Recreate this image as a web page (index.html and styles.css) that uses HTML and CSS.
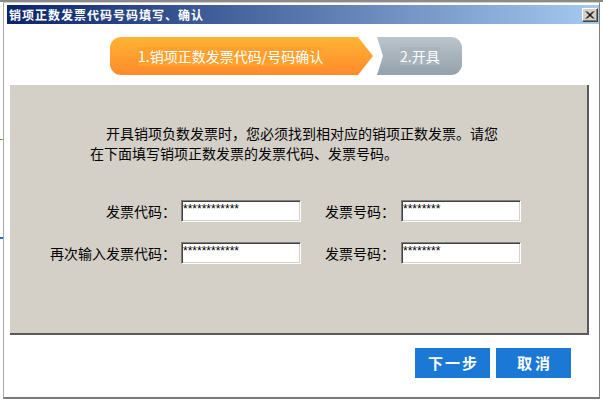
FILE: index.html
```html
<!DOCTYPE html>
<html lang="zh-CN">
<head>
<meta charset="utf-8">
<title>销项正数发票代码号码填写、确认</title>
<link rel="stylesheet" href="styles.css">
</head>
<body>
<div class="backdrop">
  <span class="bd-orange"></span>
  <span class="bd-blue"></span>
</div>
<div class="window">
  <div class="titlebar">
    <span class="title">销项正数发票代码号码填写、确认</span>
    <span class="close">
      <svg width="10" height="8" viewBox="0 0 10 8"><path d="M1 0.5 L8 7.5 M2 0.5 L9 7.5 M8 0.5 L1 7.5 M9 0.5 L2 7.5" stroke="#000" stroke-width="1" fill="none"/></svg>
    </span>
  </div>
  <div class="content">
    <div class="steps">
      <div class="step step-active"><span class="step-label">1.销项正数发票代码/号码确认</span></div>
      <div class="step step-next"><span class="step-label">2.开具</span></div>
    </div>
    <div class="panel">
      <p class="intro">开具销项负数发票时，您必须找到相对应的销项正数发票。请您<br>在下面填写销项正数发票的发票代码、发票号码。</p>
      <div class="form">
        <label class="lbl">发票代码：</label>
        <input class="field" type="text" value="************">
        <label class="lbl">发票号码：</label>
        <input class="field" type="text" value="********">
        <label class="lbl">再次输入发票代码：</label>
        <input class="field" type="text" value="************">
        <label class="lbl">发票号码：</label>
        <input class="field" type="text" value="********">
      </div>
    </div>
    <div class="actions">
      <button class="btn btn-next">下一步</button>
      <button class="btn btn-cancel">取消</button>
    </div>
  </div>
</div>
</body>
</html>
```
FILE: styles.css
```css
html, body {
  margin: 0;
  padding: 0;
}
body {
  width: 603px;
  height: 405px;
  background: #ffffff;
  border-top: 2px solid #8a8a8a;
  box-sizing: border-box;
  position: relative;
  overflow: hidden;
  font-family: "Noto Sans CJK SC", "Liberation Sans", sans-serif;
}
.backdrop {
  position: absolute;
  left: 0;
  top: 0;
  width: 3px;
  height: 405px;
}
.bd-orange {
  position: absolute;
  left: 0;
  top: 137px;
  width: 3px;
  height: 1px;
  background: #c87832;
}
.bd-blue {
  position: absolute;
  left: 0;
  top: 235px;
  width: 3px;
  height: 2px;
  background: #2a6ad0;
}
.window {
  margin-left: 3px;
  width: 597px;
  height: 397px;
  box-sizing: border-box;
  border-top: 1px solid #d4d0c8;
  border-left: 1px solid #a8a8a8;
  border-right: 1px solid #808080;
  border-bottom: 2px solid #7a7a7a;
  padding: 2px 0 0 3px;
  background: #ffffff;
  display: flex;
  flex-direction: column;
  position: relative;
}
.titlebar {
  height: 19px;
  flex: none;
  background: linear-gradient(to right, #0a246a, #a6caf0);
  display: flex;
  align-items: center;
  justify-content: space-between;
  padding: 0 1px 0 2px;
}
.title {
  color: #ffffff;
  font-size: 12px;
  font-weight: bold;
  letter-spacing: 1px;
  line-height: 19px;
}
.close {
  width: 16px;
  height: 14px;
  box-sizing: border-box;
  background: #d4d0c8;
  border-top: 1px solid #ffffff;
  border-left: 1px solid #ffffff;
  border-right: 1px solid #404040;
  border-bottom: 1px solid #404040;
  box-shadow: inset -1px -1px 0 #808080;
  display: flex;
  align-items: center;
  justify-content: center;
}
.close svg {
  display: block;
}
.content {
  flex: 1;
  display: flex;
  flex-direction: column;
}
.steps {
  height: 61px;
  box-sizing: border-box;
  padding: 13px 0 0 103px;
  display: flex;
  align-items: flex-start;
}
.step {
  height: 38px;
  display: flex;
  align-items: center;
  box-sizing: border-box;
  color: #ffffff;
  font-size: 14px;
}
.step-active {
  width: 263px;
  padding-left: 28px;
  background: linear-gradient(to bottom, #ffb434, #ff8a2a);
  border-radius: 11px 0 0 11px;
  clip-path: polygon(0 0, calc(100% - 15px) 0, 100% 50%, calc(100% - 15px) 100%, 0 100%);
}
.step-active .step-label {
  background: #ffa02f;
  line-height: 19px;
}
.step-next {
  width: 85px;
  margin-left: 4px;
  padding-left: 23px;
  background: linear-gradient(to bottom, #b9c4cc, #96a2ab);
  border-radius: 0 11px 11px 0;
  clip-path: polygon(0 0, 100% 0, 100% 100%, 0 100%, 6px 50%);
}
.step-next .step-label {
  background: #a8b3bb;
  line-height: 18px;
}
.panel {
  margin-left: 3px;
  width: 579px;
  height: 250px;
  box-sizing: border-box;
  background: #d4d0c8;
  border-right: 2px solid #5a5a5a;
  border-bottom: 2px solid #5a5a5a;
  padding: 38px 0 0 80px;
  flex: none;
}
.intro {
  margin: 0;
  font-size: 14px;
  line-height: 20px;
  color: #000000;
  text-indent: 16px;
}
.form {
  margin: 37px 0 0 -50px;
  display: grid;
  grid-template-columns: 141px 120px 100px 120px;
  grid-auto-rows: 22px;
  row-gap: 20px;
  align-items: center;
}
.lbl {
  text-align: right;
  font-size: 14px;
  color: #000000;
  padding-right: 5px;
  white-space: nowrap;
  line-height: 22px;
}
.form .lbl:nth-child(3),
.form .lbl:nth-child(7) {
  padding-right: 6px;
}
.field {
  width: 120px;
  height: 22px;
  box-sizing: border-box;
  margin: 0;
  padding: 0 1px 5px 1px;
  border: 1px solid;
  border-color: #808080 #ffffff #ffffff #808080;
  box-shadow: inset 1px 1px 0 #404040, inset -1px -1px 0 #d4d0c8;
  background: #ffffff;
  font-family: "Liberation Sans", sans-serif;
  font-size: 12px;
  color: #000000;
  outline: none;
}
.actions {
  display: flex;
  justify-content: flex-end;
  gap: 6px;
  padding: 13px 28px 0 0;
}
.btn {
  width: 75px;
  height: 30px;
  margin: 0;
  padding: 0;
  border: none;
  background: #1b78d4;
  color: #ffffff;
  font-family: "Noto Sans CJK SC", sans-serif;
  font-weight: bold;
  font-size: 15px;
  text-align: center;
  line-height: 30px;
}
.btn-next {
  letter-spacing: 2px;
  text-indent: 2px;
}
.btn-cancel {
  letter-spacing: 3px;
  text-indent: 3px;
}
```
